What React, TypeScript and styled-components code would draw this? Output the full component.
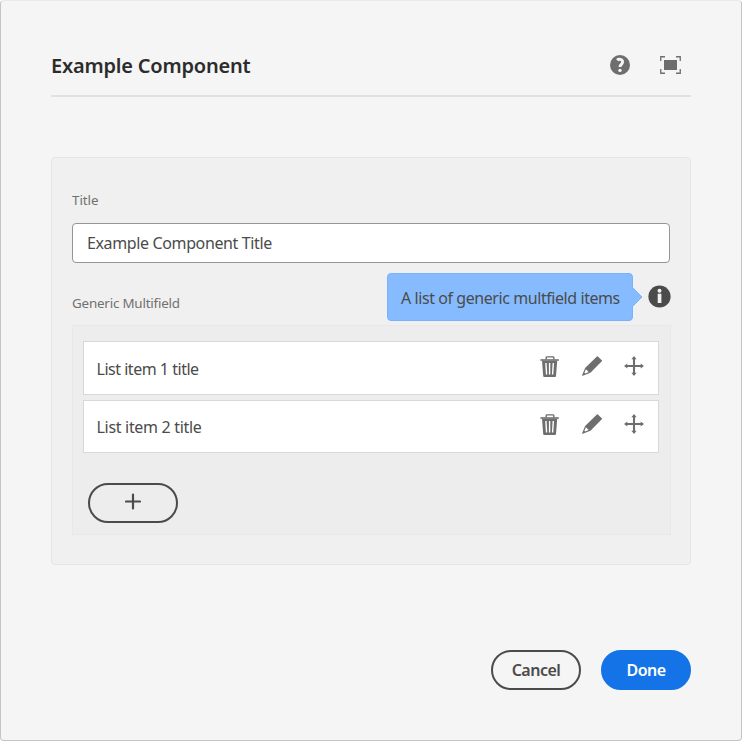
import React from 'react';
import styled, { createGlobalStyle } from 'styled-components';

const GlobalStyle = createGlobalStyle`
  * { box-sizing: border-box; }
  body { margin: 0; background: #fff; font-family: "Noto Sans", "Open Sans", sans-serif; }
  button { font-family: inherit; padding: 0; }
  svg { display: block; }
`;

const Dialog = styled.main`
  width: 742px;
  height: 741px;
  padding: 0 50px;
  display: flex;
  flex-direction: column;
  background: #f5f5f5;
  border: 1px solid #c4c4c4;
  border-top-color: #eaeaea;
  border-radius: 4px;
`;

const Header = styled.header`
  height: 96px;
  padding: 34px 10px 0 0;
  display: flex;
  justify-content: space-between;
  align-items: center;
  border-bottom: 2px solid #e1e1e1;
`;

const Heading = styled.h1`
  margin: 0;
  padding-top: 2px;
  font-size: 20px;
  line-height: 28px;
  font-weight: 600;
  letter-spacing: -0.2px;
  white-space: nowrap;
  color: #2c2c2c;
`;

const HeaderActions = styled.div`
  display: flex;
  align-items: center;
  gap: 30px;
`;

const Panel = styled.section`
  height: 408px;
  margin-top: 60px;
  padding: 30px 20px 0;
  border: 1px solid #e5e5e5;
  border-radius: 4px;
  background: #f0f0f0;
`;

const Label = styled.label<{ $spacing: number }>`
  display: block;
  font-size: 13.4px;
  line-height: 24px;
  letter-spacing: ${(p) => p.$spacing}px;
  white-space: nowrap;
  color: #707070;
`;

const Input = styled.input`
  display: block;
  width: 598px;
  height: 40px;
  margin-top: 11px;
  padding: 0 14px;
  border: 1px solid #959595;
  border-radius: 4px;
  outline: none;
  background: #fff;
  color: #4b4b4b;
  font: 400 16px "Noto Sans", sans-serif;
  letter-spacing: -0.37px;
`;

const FieldHead = styled.div`
  height: 62px;
  padding-top: 10px;
  display: flex;
  justify-content: space-between;
`;

const LabelSlot = styled.div`
  padding-top: 18px;
`;

const Hint = styled.div`
  display: flex;
  align-items: flex-start;
  gap: 15px;
  margin-right: -1px;
`;

const Tooltip = styled.div`
  position: relative;
  width: 246px;
  height: 48px;
  padding-left: 13px;
  border: 1px solid #78b2fb;
  border-radius: 4px;
  background: #86bcff;
  color: #4b4b4b;
  font-size: 16px;
  line-height: 48px;
  letter-spacing: -0.43px;
  white-space: nowrap;
`;

const TooltipArrow = styled.svg`
  position: absolute;
  left: 243px;
  top: 12px;
`;

const InfoSlot = styled.div`
  padding-top: 12px;
`;

const Multifield = styled.div`
  width: 599px;
  height: 210px;
  padding: 15px 11px 0 10px;
  border: 1px solid #e8e8e8;
  background: #ededed;
`;

const Items = styled.div`
  display: flex;
  flex-direction: column;
  gap: 5px;
`;

const Item = styled.div<{ $height: number }>`
  height: ${(p) => p.$height}px;
  padding: 0 14px 0 12.5px;
  display: flex;
  justify-content: space-between;
  border: 1px solid #d8d8d8;
  background: #fff;
`;

const ItemTitle = styled.span<{ $top: number; $spacing: number }>`
  padding-top: ${(p) => p.$top}px;
  font-size: 16px;
  line-height: 24px;
  letter-spacing: ${(p) => p.$spacing}px;
  white-space: nowrap;
  color: #4b4b4b;
`;

const ItemActions = styled.div<{ $top: number }>`
  padding-top: ${(p) => p.$top}px;
  display: flex;
  gap: 22px;
`;

const PillButton = styled.button<{ $primary?: boolean }>`
  width: 90px;
  height: 40px;
  display: flex;
  align-items: center;
  justify-content: center;
  border: 2px solid ${(p) => (p.$primary ? '#1473e6' : '#4b4b4b')};
  border-radius: 20px;
  background: ${(p) => (p.$primary ? '#1473e6' : 'transparent')};
  color: ${(p) => (p.$primary ? '#fff' : '#4b4b4b')};
  font-size: 16px;
  font-weight: 600;
  letter-spacing: -0.5px;
`;

const AddSlot = styled.div`
  padding: 30px 0 0 5px;
`;

const Footer = styled.footer`
  margin-top: 85px;
  display: flex;
  justify-content: flex-end;
  gap: 20px;
`;

const HelpIcon = () => (
  <svg width="20" height="20" viewBox="0 0 20 20">
    <circle cx="10" cy="10" r="10" fill="#6e6e6e" />
    <path d="M7.1 5.1C8.6 3.7 12.6 4 12.6 7c0 2.3-2.6 2.5-2.6 5" fill="none" stroke="#f5f5f5" strokeWidth="2.9" />
    <circle cx="10" cy="15.4" r="1.7" fill="#f5f5f5" />
  </svg>
);

const FullScreenIcon = () => (
  <svg width="21" height="18" viewBox="0 0 21 18">
    <path d="M.75 5V.75H5M16 .75h4.25V5M20.25 13v4.25H16M5 17.25H.75V13" fill="none" stroke="#6e6e6e" strokeWidth="1.3" />
    <path d="M4 4h13v10H4z" fill="#6e6e6e" />
  </svg>
);

const InfoIcon = () => (
  <svg width="23" height="23" viewBox="0 0 23 23">
    <circle cx="11.5" cy="11.5" r="11.1" fill="#4b4b4b" />
    <circle cx="11.5" cy="5.7" r="2" fill="#f2f2f2" />
    <path d="M9.7 8.7h3.7V18H9.7z" fill="#f2f2f2" />
  </svg>
);

const TrashIcon = () => (
  <svg width="20" height="22" viewBox="0 0 20 22">
    <path d="M6.2 3.5V1.6q0-.7.7-.7h6.2q.7 0 .7.7v1.9" fill="none" stroke="#6e6e6e" strokeWidth="1.4" />
    <path d="M.4 3.2h18.4v1.6H.4z" fill="#6e6e6e" />
    <path d="M2 4.8h15.2L16 20q-.1 1-1 1H4.2q-.9 0-1-1z" fill="#6e6e6e" />
    <path d="M5.9 7l.7 11.5M9.6 7v11.5M13.3 7l-.7 11.5" stroke="#fff" strokeWidth="1.4" />
  </svg>
);

const PencilIcon = () => (
  <svg width="20" height="20" viewBox="0 0 20 20">
    <path d="M14.9.4q.5-.5 1 0l3.9 3.9q.5.5 0 1L8.4 16.8.8 19.7q-.8.2-.6-.6l2.9-7z" fill="#6e6e6e" />
    <path d="M3.9 13.2l2.8 2.8-3.5 1.6-.8-.8z" fill="#fff" />
  </svg>
);

const MoveIcon = () => (
  <svg width="20" height="20" viewBox="0 0 20 20">
    <path d="M10 2v16M2 10h16" stroke="#6e6e6e" strokeWidth="2.1" />
    <path d="M10 0l2.6 3.3H7.4zM10 20l2.6-3.3H7.4zM0 10l3.3-2.6v5.2zM20 10l-3.3-2.6v5.2z" fill="#6e6e6e" />
  </svg>
);

const PlusIcon = () => (
  <svg width="16" height="20" viewBox="0 0 16 20">
    <path d="M8 1.5v14M1 8.5h14" stroke="#4b4b4b" strokeWidth="2.2" strokeLinecap="round" />
  </svg>
);

const items = [
  { title: 'List item 1 title', height: 54, textTop: 15, iconTop: 14, spacing: -0.48 },
  { title: 'List item 2 title', height: 53, textTop: 14, iconTop: 13, spacing: -0.31 },
];

export default function App() {
  return (
    <>
      <GlobalStyle />
      <Dialog>
        <Header>
          <Heading>Example Component</Heading>
          <HeaderActions>
            <HelpIcon />
            <FullScreenIcon />
          </HeaderActions>
        </Header>
        <Panel>
          <Label $spacing={-0.05} htmlFor="title">Title</Label>
          <Input id="title" defaultValue="Example Component Title" />
          <FieldHead>
            <LabelSlot>
              <Label as="div" $spacing={-0.2}>Generic Multifield</Label>
            </LabelSlot>
            <Hint>
              <Tooltip>
                A list of generic multfield items
                <TooltipArrow width="12" height="22" viewBox="0 0 12 22">
                  <path d="M0 1h1.5L11 11 1.5 21H0z" fill="#86bcff" />
                  <path d="M1.5 1.5L11 11 1.5 20.5" fill="none" stroke="#78b2fb" />
                </TooltipArrow>
              </Tooltip>
              <InfoSlot><InfoIcon /></InfoSlot>
            </Hint>
          </FieldHead>
          <Multifield>
            <Items>
              {items.map((item) => (
                <Item key={item.title} $height={item.height}>
                  <ItemTitle $top={item.textTop} $spacing={item.spacing}>{item.title}</ItemTitle>
                  <ItemActions $top={item.iconTop}>
                    <TrashIcon />
                    <PencilIcon />
                    <MoveIcon />
                  </ItemActions>
                </Item>
              ))}
            </Items>
            <AddSlot>
              <PillButton aria-label="Add"><PlusIcon /></PillButton>
            </AddSlot>
          </Multifield>
        </Panel>
        <Footer>
          <PillButton>Cancel</PillButton>
          <PillButton $primary>Done</PillButton>
        </Footer>
      </Dialog>
    </>
  );
}
